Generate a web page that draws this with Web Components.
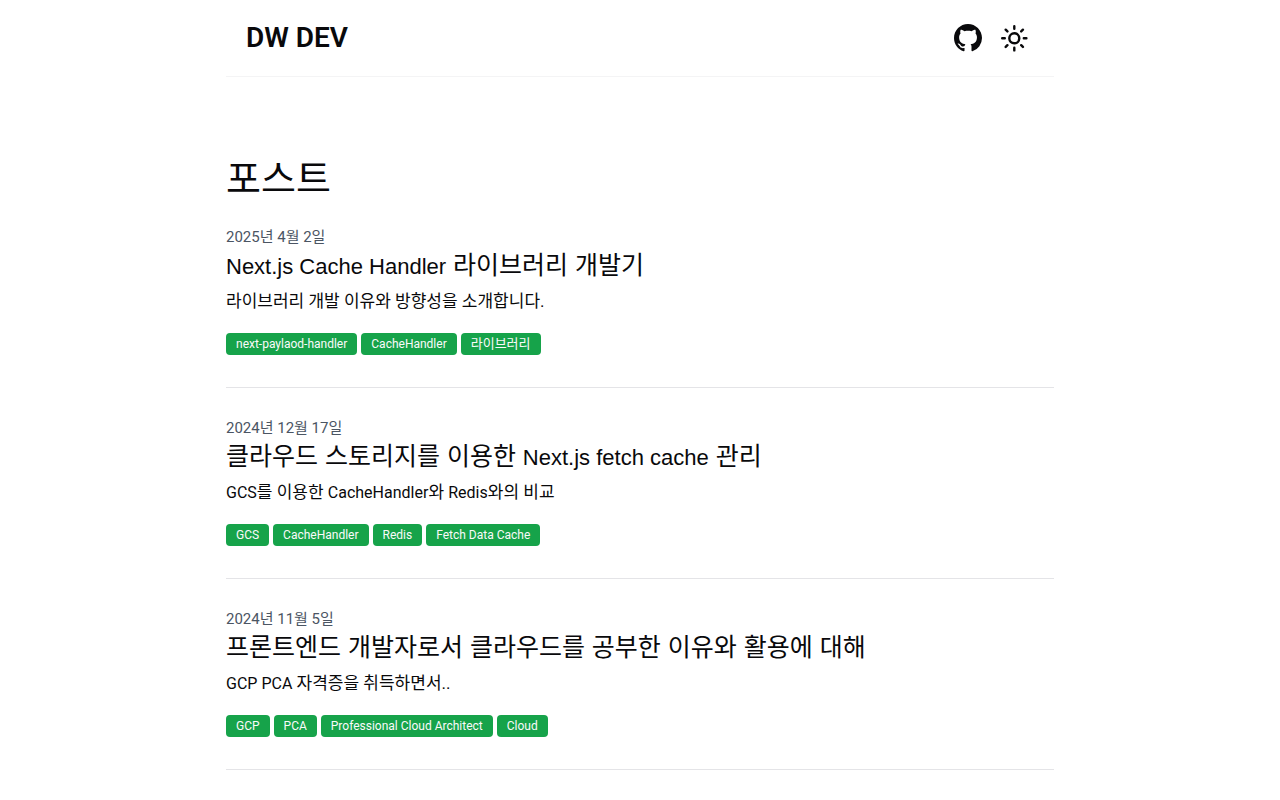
<!DOCTYPE html>
<html lang="ko">
<head>
<meta charset="utf-8">
<meta name="viewport" content="width=device-width, initial-scale=1">
<title>DW DEV</title>
<style>
  body { margin: 0; background: #fff; color: #09090b; font-family: Roboto, "Noto Sans CJK KR", sans-serif; }
  /* Latin runs are set slightly smaller than the Hangul around them */
  [lang="en"] { line-height: 1; }
  [slot="title"] [lang="en"] { font-size: 22px; }
  [slot="summary"] [lang="en"] { font-size: 16px; }
</style>
</head>
<body>
<blog-page>
  <site-header slot="header"></site-header>
  <post-list heading="포스트">
    <post-item href="#cache-handler">
      <time slot="date" datetime="2025-04-02">2025년 4월 2일</time>
      <span slot="title"><span lang="en">Next.js Cache Handler</span> 라이브러리 개발기</span>
      <span slot="summary">라이브러리 개발 이유와 방향성을 소개합니다.</span>
      <post-tag slot="tags" lang="en">next-paylaod-handler</post-tag>
      <post-tag slot="tags" lang="en">CacheHandler</post-tag>
      <post-tag slot="tags">라이브러리</post-tag>
    </post-item>
    <post-item href="#fetch-cache">
      <time slot="date" datetime="2024-12-17">2024년 12월 17일</time>
      <span slot="title">클라우드 스토리지를 이용한 <span lang="en">Next.js fetch cache</span> 관리</span>
      <span slot="summary"><span lang="en">GCS</span>를 이용한 <span lang="en">CacheHandler</span>와 <span lang="en">Redis</span>와의 비교</span>
      <post-tag slot="tags" lang="en">GCS</post-tag>
      <post-tag slot="tags" lang="en">CacheHandler</post-tag>
      <post-tag slot="tags" lang="en">Redis</post-tag>
      <post-tag slot="tags" lang="en">Fetch Data Cache</post-tag>
    </post-item>
    <post-item href="#cloud">
      <time slot="date" datetime="2024-11-05">2024년 11월 5일</time>
      <span slot="title">프론트엔드 개발자로서 클라우드를 공부한 이유와 활용에 대해</span>
      <span slot="summary"><span lang="en">GCP PCA</span> 자격증을 취득하면서..</span>
      <post-tag slot="tags" lang="en">GCP</post-tag>
      <post-tag slot="tags" lang="en">PCA</post-tag>
      <post-tag slot="tags" lang="en">Professional Cloud Architect</post-tag>
      <post-tag slot="tags" lang="en">Cloud</post-tag>
    </post-item>
  </post-list>
</blog-page>
<script>
  class BaseElement extends HTMLElement {
    constructor() {
      super();
      this.attachShadow({ mode: "open" });
    }
    connectedCallback() {
      if (!this.shadowRoot.firstChild) this.shadowRoot.innerHTML = this.render();
    }
  }

  customElements.define("blog-page", class extends BaseElement {
    render() {
      return `<style>
        :host { display: block; max-width: 828px; margin: 0 auto; }
        main { padding-top: 82px; }
      </style>
      <slot name="header"></slot>
      <main><slot></slot></main>`;
    }
  });

  customElements.define("site-header", class extends BaseElement {
    render() {
      return `<style>
        :host { display: block; border-bottom: 1px solid #f4f4f5; }
        header { display: flex; align-items: center; justify-content: space-between; height: 76px; padding: 0 20px; }
        a, button { color: inherit; text-decoration: none; }
        .logo { font-size: 28px; line-height: 40px; font-weight: 600; }
        nav { display: flex; align-items: center; gap: 10px; }
        nav a { display: flex; }
        button { display: flex; padding: 4px 5px; border: 0; background: none; cursor: pointer; }
        svg { display: block; }
      </style>
      <header>
        <a class="logo" href="#">DW DEV</a>
        <nav>
          <a href="#github" aria-label="GitHub">
            <svg width="32" height="32" viewBox="0 0 32 32" aria-hidden="true"><path transform="translate(2 2) scale(1.75)" fill="currentColor" d="M8 0C3.58 0 0 3.58 0 8c0 3.54 2.29 6.53 5.47 7.59.4.07.55-.17.55-.38 0-.19-.01-.82-.01-1.49-2.01.37-2.53-.49-2.69-.94-.09-.23-.48-.94-.82-1.13-.28-.15-.68-.52-.01-.53.63-.01 1.08.58 1.23.82.72 1.21 1.87.87 2.33.66.07-.52.28-.87.51-1.07-1.78-.2-3.64-.89-3.64-3.95 0-.87.31-1.59.82-2.15-.08-.2-.36-1.02.08-2.12 0 0 .67-.21 2.2.82.64-.18 1.32-.27 2-.27s1.36.09 2 .27c1.53-1.04 2.2-.82 2.2-.82.44 1.1.16 1.92.08 2.12.51.56.82 1.27.82 2.15 0 3.07-1.87 3.75-3.65 3.95.29.25.54.73.54 1.48 0 1.07-.01 1.93-.01 2.2 0 .21.15.46.55.38A8.01 8.01 0 0 0 16 8c0-4.42-3.58-8-8-8z"/></svg>
          </a>
          <button type="button" aria-label="Theme">
            <svg width="30" height="30" viewBox="0 0 30 30" fill="none" stroke="currentColor" stroke-width="2.4" stroke-linecap="round" aria-hidden="true"><circle cx="15.300" cy="15.300" r="5"/><path d="M15.300 3.200v2.600M15.300 24.800v2.600M3.200 15.300h2.600M24.800 15.300h2.600M6.700 6.700l1.700 1.700M22.200 22.200l1.700 1.700M6.700 23.900l1.700-1.700M22.200 8.400l1.700-1.700"/></svg>
          </button>
        </nav>
      </header>`;
    }
  });

  customElements.define("post-list", class extends BaseElement {
    render() {
      return `<style>
        :host { display: block; }
        h1 { margin: 0 0 30px; font-size: 38px; line-height: 40px; font-weight: 400; }
      </style>
      <h1>${this.getAttribute("heading")}</h1>
      <slot></slot>`;
    }
  });

  customElements.define("post-item", class extends BaseElement {
    render() {
      return `<style>
        :host { display: block; margin-bottom: 32px; border-bottom: 1px solid #e4e4e7; }
        article { display: flex; flex-direction: column; padding-bottom: 32px; }
        .date { margin-bottom: 4px; font-size: 15px; line-height: 16px; color: #4b5563; }
        h2 { margin: 0 0 8px; font-family: "Liberation Sans", "Noto Sans CJK KR", sans-serif; font-size: 25px; line-height: 32px; font-weight: 400; }
        a { color: inherit; text-decoration: none; }
        p { margin: 0 0 20px; font-size: 17px; line-height: 24px; }
        .tags { display: flex; flex-wrap: wrap; gap: 4px; }
      </style>
      <article>
        <div class="date"><slot name="date"></slot></div>
        <h2><a href="${this.getAttribute("href")}"><slot name="title"></slot></a></h2>
        <p><slot name="summary"></slot></p>
        <div class="tags"><slot name="tags"></slot></div>
      </article>`;
    }
  });

  customElements.define("post-tag", class extends BaseElement {
    render() {
      return `<style>
        :host { display: block; padding: 3px 10px; border-radius: 4px; background: #16a34a; color: #fafafa; font-size: 13px; }
        :host([lang="en"]) { font-size: 12px; }
        span { display: block; line-height: 16px; }
      </style><span><slot></slot></span>`;
    }
  });
</script>
</body>
</html>
